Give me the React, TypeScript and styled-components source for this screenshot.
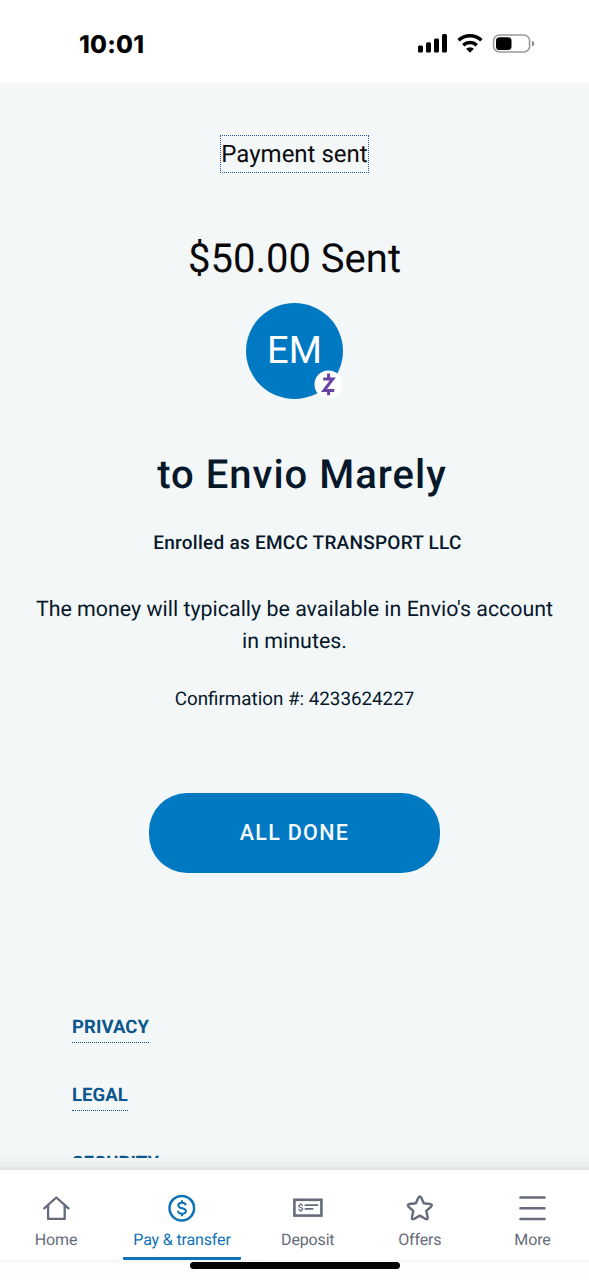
import styled, { createGlobalStyle } from "styled-components";

interface ITextProps {
    size: number;
    line: number;
    weight?: number;
    spacing?: number;
    top?: number;
    shift?: number;
    color?: string;
}

interface ITabProps {
    $active?: boolean;
}

const GlobalStyle = createGlobalStyle`
  * {
    box-sizing: border-box;
  }

  body {
    margin: 0;
    background-color: #fdfdfd;
    font-family: Roboto, "Liberation Sans", sans-serif;
    text-rendering: geometricPrecision;
  }
`;

const Screen = styled.div`
    width: 589px;
    height: 1280px;
    display: flex;
    flex-direction: column;
    overflow: hidden;
`;

const StatusBar = styled.header`
    height: 83px;
    flex-shrink: 0;
    display: flex;
    justify-content: space-between;
    padding: 29px 52px 0 79px;
    background-color: #ffffff;
`;

const Clock = styled.span`
    font-family: Inter, sans-serif;
    font-size: 24.5px;
    line-height: 31px;
    font-weight: 800;
    letter-spacing: 0.2px;
    color: #000000;
`;

const Content = styled.main`
    height: 1075px;
    flex-shrink: 0;
    display: flex;
    flex-direction: column;
    align-items: center;
    overflow: hidden;
    padding-top: 52px;
    background-color: #f3f7f8;
`;

const Title = styled.h1`
    margin: 0;
    width: 149px;
    height: 39px;
    border: 1px dotted #2b55ae;
    display: flex;
    justify-content: center;
    white-space: nowrap;
    font-size: 24px;
    line-height: 36px;
    font-weight: 400;
    color: #0b0b0d;
`;

const Text = styled.p.withConfig({
    shouldForwardProp: (prop) => !["size", "line", "weight", "spacing", "top", "shift", "color"].includes(prop),
})<ITextProps>`
    margin: ${(props) => props.top ?? 0}px 0 0 ${(props) => props.shift ?? 0}px;
    text-align: center;
    white-space: nowrap;
    font-size: ${(props) => props.size}px;
    line-height: ${(props) => props.line}px;
    font-weight: ${(props) => props.weight ?? 400};
    letter-spacing: ${(props) => props.spacing ?? 0}px;
    color: ${(props) => props.color ?? "#06182a"};
`;

const Avatar = styled.div`
    position: relative;
    margin-top: 20px;
    width: 97px;
    height: 96px;
    flex-shrink: 0;
    border-radius: 50%;
    background-color: #0079c2;
    text-align: center;
    font-size: 38px;
    line-height: 96px;
    color: #ffffff;
`;

const Badge = styled.svg`
    position: absolute;
    right: 0;
    bottom: 0;
    width: 29px;
    height: 29px;
`;

const DoneButton = styled.button`
    margin-top: 80px;
    width: 291px;
    height: 80px;
    flex-shrink: 0;
    border: none;
    border-radius: 38px;
    padding: 0 0 2px;
    background-color: #0079c2;
    font-family: inherit;
    font-size: 21.5px;
    font-weight: 500;
    letter-spacing: 1.3px;
    color: #f4fafd;
    cursor: pointer;
`;

const Links = styled.ul`
    align-self: flex-start;
    list-style: none;
    margin: 138px 0 0 72px;
    padding: 0;
    display: flex;
    flex-direction: column;
    align-items: flex-start;
    gap: 36px;
`;

const FooterLink = styled.li`
    height: 32px;
    border-bottom: 1px dotted #0b568c;
    font-size: 18.5px;
    line-height: 33px;
    font-weight: 700;
    letter-spacing: 0.1px;
    color: #0b568c;
`;

const Fade = styled.div`
    height: 12px;
    flex-shrink: 0;
    background: linear-gradient(#f1f5f6, #eaeeef 60%, #dfe2e3);
`;

const TabBar = styled.nav`
    height: 90px;
    flex-shrink: 0;
    display: grid;
    grid-template-columns: 112px 140px 111.5px 112.5px 113px;
    background-color: #ffffff;
    box-shadow: 0 1px 2px rgba(0, 0, 0, 0.05);
`;

const Tab = styled.div<ITabProps>`
    justify-self: center;
    display: flex;
    flex-direction: column;
    align-items: center;
    width: ${(props) => (props.$active ? "118px" : "100%")};
    padding-top: 23px;
    border-bottom: 3px solid ${(props) => (props.$active ? "#0f73b8" : "transparent")};
    border-radius: 1px;
    font-size: 16px;
    line-height: 22px;
    letter-spacing: -0.15px;
    color: ${(props) => (props.$active ? "#0f73b8" : "#656b7a")};

    svg {
        width: 32px;
        height: 30px;
        margin-bottom: 6px;
        flex-shrink: 0;
    }
`;

const HomeArea = styled.footer`
    height: 20px;
    flex-shrink: 0;
    display: flex;
    justify-content: center;
    padding-top: 2px;
`;

const HomeIndicator = styled.div`
    width: 210px;
    height: 7px;
    border-radius: 4px;
    background-color: #000000;
`;

function StatusIcons() {
    return (
        <svg width="119" height="30" viewBox="0 0 119 30">
            <rect x="0" y="16.5" width="5" height="7" rx="1.5" />
            <rect x="8" y="13.3" width="5" height="10.2" rx="1.5" />
            <rect x="16" y="9.5" width="5" height="14" rx="1.5" />
            <rect x="24" y="5" width="5" height="18.5" rx="1.5" />
            <g fill="none" stroke="#000" strokeWidth="3.5">
                <path d="M40.6 11.2a17 17 0 0 1 22.8 0" />
                <path d="M45.2 16.2a10.2 10.2 0 0 1 13.6 0" />
            </g>
            <path d="M52 23.8l-3.9-4a5.8 5.8 0 0 1 7.8 0z" />
            <rect x="75.6" y="6" width="36" height="17" rx="5.8" fill="none" stroke="#999" strokeWidth="1.6" />
            <rect x="78" y="8.2" width="15.5" height="12.8" rx="3.6" />
            <path d="M114 11.8c2.9.9 2.9 4.7 0 5.6z" fill="#888" />
        </svg>
    );
}

function HomeIcon() {
    return (
        <svg viewBox="0 0 32 30" fill="none" stroke="currentColor" strokeWidth="2.3" strokeLinecap="round" strokeLinejoin="round">
            <path d="M4.2 15.4L16.3 4.5l12.2 10.9" />
            <path d="M8.1 12.5v13.4h16.6V12.5" />
        </svg>
    );
}

function PayIcon() {
    return (
        <svg viewBox="0 0 32 30" fill="none" stroke="currentColor" strokeWidth="2">
            <circle cx="15.8" cy="15.2" r="12.3" strokeWidth="2.5" />
            <path d="M19.8 12.2c-.4-1.7-1.8-2.5-3.8-2.5-2.2 0-3.7 1-3.7 2.7 0 3.9 7.6 1.6 7.6 5.5 0 1.8-1.6 2.8-3.9 2.8-2.2 0-3.8-1-4.1-2.8M16 7.3v2.6M16 20.5v2.8" />
        </svg>
    );
}

function DepositIcon() {
    return (
        <svg viewBox="0 0 32 30" fill="none" stroke="currentColor" strokeWidth="1.8">
            <rect x="2.4" y="6.8" width="27" height="15.8" strokeWidth="2.6" />
            <path d="M10.6 12.9c-.2-.8-.9-1.2-1.9-1.2s-1.9.5-1.9 1.4c0 2 3.9.9 3.9 2.8 0 1-.9 1.5-2 1.5s-1.9-.5-2.1-1.5M8.7 10.2v1.5M8.7 17.3v1.6" strokeWidth="1.3" />
            <path d="M13.4 12.2h12M13.4 15.9h7.2" strokeLinecap="round" />
        </svg>
    );
}

function OffersIcon() {
    return (
        <svg viewBox="0 0 32 30" fill="none" stroke="currentColor" strokeWidth="2.4" strokeLinejoin="round">
            <path d="M14.3 4.7q1.5-2.7 3 0l2.4 5.6 6.3.7q3.1.5.9 2.8l-4.6 4.1 1.3 5.9q.5 3.5-2.4 2L15.8 22.6l-5.4 3.2q-2.9 1.5-2.4-2l1.3-5.9-4.6-4.1q-2.2-2.3.9-2.8l6.3-.7z" />
        </svg>
    );
}

function MoreIcon() {
    return (
        <svg viewBox="0 0 32 30" fill="none" stroke="currentColor" strokeWidth="2.4" strokeLinecap="round">
            <path d="M3.4 4.5h24.2M3.4 15.2h24.2M3.4 26h24.2" />
        </svg>
    );
}

const links = ["PRIVACY", "LEGAL", "SECURITY"];

const tabs = [
    { label: "Home", Icon: HomeIcon },
    { label: "Pay & transfer", Icon: PayIcon, active: true },
    { label: "Deposit", Icon: DepositIcon },
    { label: "Offers", Icon: OffersIcon },
    { label: "More", Icon: MoreIcon },
];

function App() {
    return (
        <Screen>
            <GlobalStyle />
            <StatusBar>
                <Clock>10:01</Clock>
                <StatusIcons />
            </StatusBar>
            <Content>
                <Title>Payment sent</Title>
                <Text size={40} line={48} top={62} color="#08080a">$50.00 Sent</Text>
                <Avatar>
                    EM
                    <Badge viewBox="0 0 29 29">
                        <circle cx="14.5" cy="14.5" r="14" fill="#fff" />
                        <path d="M9.2 9h9.6L10 20.4h10.2M14.6 3.4v4.8M14.6 20.3v5" fill="none" stroke="#6b40a5" strokeWidth="3" />
                    </Badge>
                </Avatar>
                <Text size={40} line={48} top={52} shift={15} weight={500} spacing={1}>to Envio Marely</Text>
                <Text size={19} line={28} top={30} shift={26} weight={500} spacing={0.25}>Enrolled as EMCC TRANSPORT LLC</Text>
                <Text size={21.4} line={32} top={37}>
                    The money will typically be available in Envio's account<br />in minutes.
                </Text>
                <Text size={18.8} line={28} top={27}>Confirmation #: 4233624227</Text>
                <DoneButton>ALL DONE</DoneButton>
                <Links>
                    {links.map((link) => (
                        <FooterLink key={link}>{link}</FooterLink>
                    ))}
                </Links>
            </Content>
            <Fade />
            <TabBar>
                {tabs.map(({ label, Icon, active }) => (
                    <Tab key={label} $active={active}>
                        <Icon />
                        {label}
                    </Tab>
                ))}
            </TabBar>
            <HomeArea>
                <HomeIndicator />
            </HomeArea>
        </Screen>
    );
}

export default App;
